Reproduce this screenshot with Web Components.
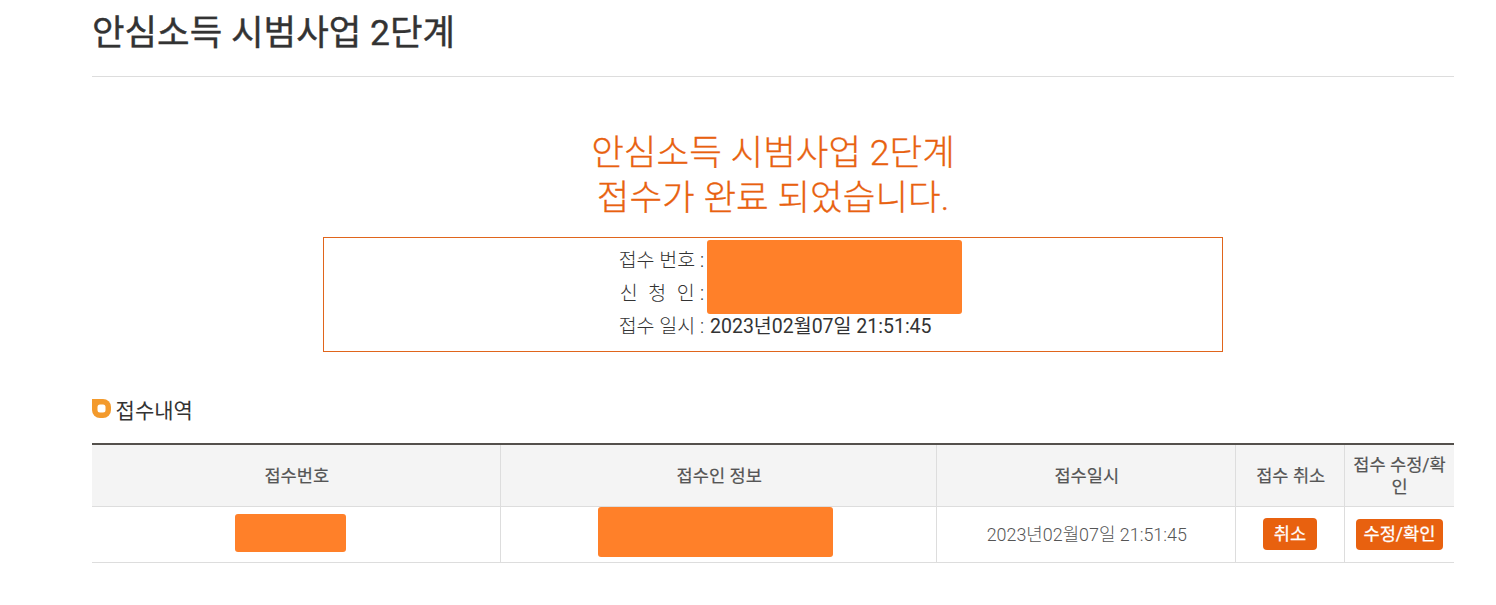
<!DOCTYPE html>
<html lang="ko"><head><meta charset="utf-8"><title>안심소득 시범사업 2단계</title>
<style>
html,body{margin:0;background:#fff}
body{font-family:Roboto,"Noto Sans CJK KR",sans-serif;color:#333}
</style></head><body>
<receipt-page>
  <page-title>안심소득 시범사업 2단계</page-title>
  <done-message>안심소득 시범사업 2단계<br>접수가 완료 되었습니다.</done-message>
  <receipt-box></receipt-box>
  <section-title>접수내역</section-title>
  <receipt-table></receipt-table>
</receipt-page>
<script>
const F='Roboto,"Noto Sans CJK KR",sans-serif';
function def(name,html){
  customElements.define(name,class extends HTMLElement{
    constructor(){super();this.attachShadow({mode:'open'}).innerHTML=html;}
  });
}
def('receipt-page',`<style>:host{display:block;padding:0 42px 0 92px}</style><slot></slot>`);
def('page-title',`<style>:host{display:block;height:76px;border-bottom:1px solid #ddd;font:400 35.4px/67px ${F};-webkit-text-stroke:.4px #333;color:#333;white-space:nowrap}</style><slot></slot>`);
def('done-message',`<style>:host{display:block;margin-top:54px;text-align:center;font:300 35.5px/45px ${F};-webkit-text-stroke:.3px #e8610f;color:#e8610f}</style><slot></slot>`);
def('redact-block',`<style>:host{display:block;position:absolute;background:#ff8029;border-radius:3px}</style>`);
def('receipt-box',`<style>
:host{display:block;position:relative;box-sizing:border-box;width:900px;height:115px;margin:16px 0 0 231px;border:1px solid #e0651c;padding-top:6px;font:400 19.5px/33px ${F};color:#333}
.r{display:grid;grid-template-columns:380px 1fr;column-gap:6px}
.l{text-align:right;font-weight:300;color:#333}
.s{word-spacing:.5px}
.v{white-space:nowrap}
redact-block{left:383px;top:2px;width:255px;height:74px}
</style>
<div class="r"><div class="l">접수 번호 :</div><div class="v"></div></div>
<div class="r"><div class="l s">신&nbsp; 청&nbsp; 인 :</div><div class="v"></div></div>
<div class="r"><div class="l">접수 일시 :</div><div class="v">2023년02월07일 21:51:45</div></div>
<redact-block></redact-block>`);
def('section-title',`<style>
:host{display:flex;align-items:center;gap:4.6px;margin-top:44px;height:30px;font:400 21px/30px ${F};color:#333}
svg{width:19px;height:19px;flex:none;margin-top:-5px}
</style><svg viewBox="0 0 19 19" aria-hidden="true"><path fill="#f39a2c" d="M0 0H11a8 8 0 0 1 8 8V11a8 8 0 0 1-8 8H8A8 8 0 0 1 0 11Z"/><rect x="5.5" y="5.5" width="8" height="8" rx="2.5" fill="#fff"/></svg><slot></slot>`);
def('receipt-table',`<style>
:host{display:block;margin-top:17px}
table{width:100%;table-layout:fixed;border-collapse:separate;border-spacing:0;border-top:2px solid #54504c;font:400 17.6px/22px ${F};color:#555}
th{height:61px;padding:0 0 0 1.5px;background:#f4f4f4;font-weight:400;-webkit-text-stroke:.2px #555;border-bottom:1px solid #ddd;border-right:1px solid #ddd}
td{height:55px;padding:0 0 0 1.5px;text-align:center;border-bottom:1px solid #ddd;border-right:1px solid #ddd;font-weight:300;font-size:17.9px;color:#555}
th:last-child,td:last-child{border-right:0}
th.w{padding:0 4px}
td.c{vertical-align:top;padding:0}
.btn{display:inline-block;background:#e8610f;color:#fff;border-radius:4px;font:400 17.6px/32px ${F};-webkit-text-stroke:.25px #fff;padding:0 11px;white-space:nowrap;vertical-align:middle;position:relative;top:-1px}
td.n{padding:0}
.b2{line-height:31px;padding:0 7.5px;top:0}
redact-block{position:static}
.a{width:111px;height:38px;margin:7px 0 0 143px}.b{width:235px;height:50px;margin:0 0 0 97px}
</style>
<table>
<colgroup><col style="width:409px"><col style="width:436px"><col style="width:299px"><col style="width:109px"><col></colgroup>
<tr><th>접수번호</th><th>접수인 정보</th><th>접수일시</th><th>접수 취소</th><th class="w">접수 수정/확인</th></tr>
<tr><td class="c"><redact-block class="a"></redact-block></td><td class="c"><redact-block class="b"></redact-block></td><td>2023년02월07일 21:51:45</td><td class="n"><span class="btn">취소</span></td><td class="n"><span class="btn b2">수정/확인</span></td></tr>
</table>`);
</script>
</body></html>
